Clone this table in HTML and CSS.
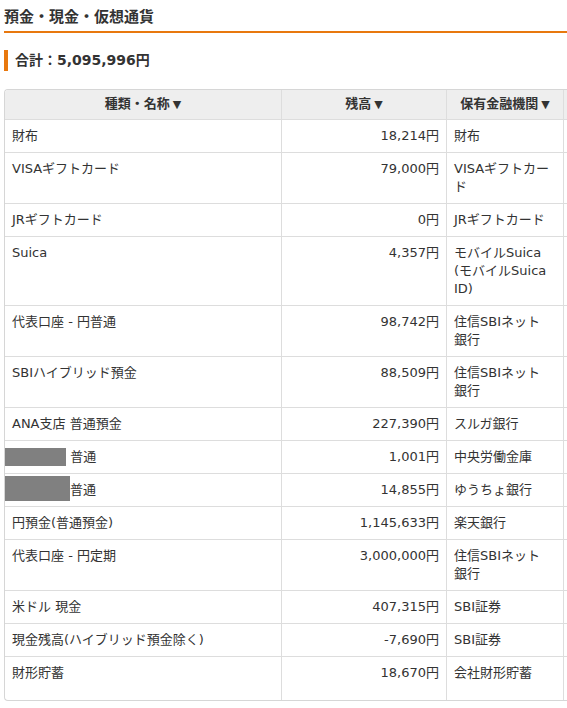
FILE: index.html
```html
<!DOCTYPE html>
<html lang="ja">
<head>
<meta charset="utf-8">
<title>預金・現金・仮想通貨</title>
<link rel="stylesheet" href="styles.css">
</head>
<body>
<h1 class="title">預金・現金・仮想通貨</h1>
<h2 class="total">合計：5,095,996円</h2>
<div class="table-wrap">
<table class="assets">
<thead>
<tr>
<th class="c1">種類・名称<span class="sort">▼</span></th>
<th class="c2">残高<span class="sort">▼</span></th>
<th class="c3">保有金融機関<span class="sort">▼</span></th>
<th class="c4"></th>
</tr>
</thead>
<tbody>
<tr><td>財布</td><td class="num">18,214円</td><td class="inst">財布</td><td></td></tr>
<tr><td>VISAギフトカード</td><td class="num">79,000円</td><td class="inst">VISAギフトカー<br>ド</td><td></td></tr>
<tr><td>JRギフトカード</td><td class="num">0円</td><td class="inst">JRギフトカード</td><td></td></tr>
<tr><td>Suica</td><td class="num">4,357円</td><td class="inst">モバイルSuica<br>(モバイルSuica<br>ID)</td><td></td></tr>
<tr><td>代表口座 - 円普通</td><td class="num">98,742円</td><td class="inst">住信SBIネット<br>銀行</td><td></td></tr>
<tr><td>SBIハイブリッド預金</td><td class="num">88,509円</td><td class="inst">住信SBIネット<br>銀行</td><td></td></tr>
<tr><td>ANA支店 普通預金</td><td class="num">227,390円</td><td class="inst">スルガ銀行</td><td></td></tr>
<tr><td><span class="redact redact-a"></span> 普通</td><td class="num">1,001円</td><td class="inst">中央労働金庫</td><td></td></tr>
<tr><td><span class="redact redact-b"></span>普通</td><td class="num">14,855円</td><td class="inst">ゆうちょ銀行</td><td></td></tr>
<tr><td>円預金(普通預金)</td><td class="num">1,145,633円</td><td class="inst">楽天銀行</td><td></td></tr>
<tr><td>代表口座 - 円定期</td><td class="num">3,000,000円</td><td class="inst">住信SBIネット<br>銀行</td><td></td></tr>
<tr><td>米ドル 現金</td><td class="num">407,315円</td><td class="inst">SBI証券</td><td></td></tr>
<tr><td>現金残高(ハイブリッド預金除く)</td><td class="num">-7,690円</td><td class="inst">SBI証券</td><td></td></tr>
<tr class="last"><td>財形貯蓄</td><td class="num">18,670円</td><td class="inst">会社財形貯蓄</td><td></td></tr>
</tbody>
</table>
</div>
</body>
</html>
```
FILE: styles.css
```css
html {
  overflow: hidden;
}

body {
  margin: 0;
  padding: 0 0 0 4px;
  font-family: "DejaVu Sans", "Noto Sans CJK JP", sans-serif;
  color: #333333;
  background: #ffffff;
}

.title {
  margin: 6px 0 0 0;
  padding: 0 0 3px 0;
  font-size: 15px;
  line-height: 22px;
  font-weight: bold;
  color: #333333;
  border-bottom: 2px solid #e8780e;
}

.total {
  margin: 17px 0 0 0;
  padding: 0 0 0 7px;
  border-left: 4px solid #e8780e;
  font-size: 14px;
  line-height: 21px;
  font-weight: bold;
  color: #333333;
}

.table-wrap {
  margin-top: 18px;
  border: 1px solid #d6d6d6;
  border-right: none;
  border-radius: 4px 0 0 4px;
  overflow: hidden;
}

.assets {
  width: 659px;
  table-layout: fixed;
  border-collapse: separate;
  border-spacing: 0;
  font-size: 13px;
  line-height: 18px;
}

.assets th,
.assets td {
  box-sizing: border-box;
  border-right: 1px solid #dddddd;
  border-bottom: 1px solid #dddddd;
  padding: 7px 7px;
  vertical-align: top;
  text-align: left;
  white-space: nowrap;
  color: #333333;
}

.assets th {
  background: #eeeeee;
  font-weight: bold;
  text-align: center;
  padding: 5px 7px 6px;
}

.assets .sort {
  margin-left: 3px;
  font-size: 11px;
  line-height: 11px;
}

.assets .c1 { width: 277px; }
.assets .c2 { width: 165px; }
.assets .c3 { width: 117px; }
.assets .c4 { width: 100px; }

.assets td.num {
  text-align: right;
}

.assets tr.last td {
  border-bottom: none;
  padding-bottom: 18px;
}

.redact {
  display: inline-block;
  background: #808080;
  vertical-align: top;
}

.redact-a {
  width: 63px;
  height: 18px;
  margin-left: -9px;
}

.redact-b {
  width: 66px;
  height: 25px;
  margin-left: -8px;
  margin-top: -5px;
  margin-bottom: -2px;
}
```
